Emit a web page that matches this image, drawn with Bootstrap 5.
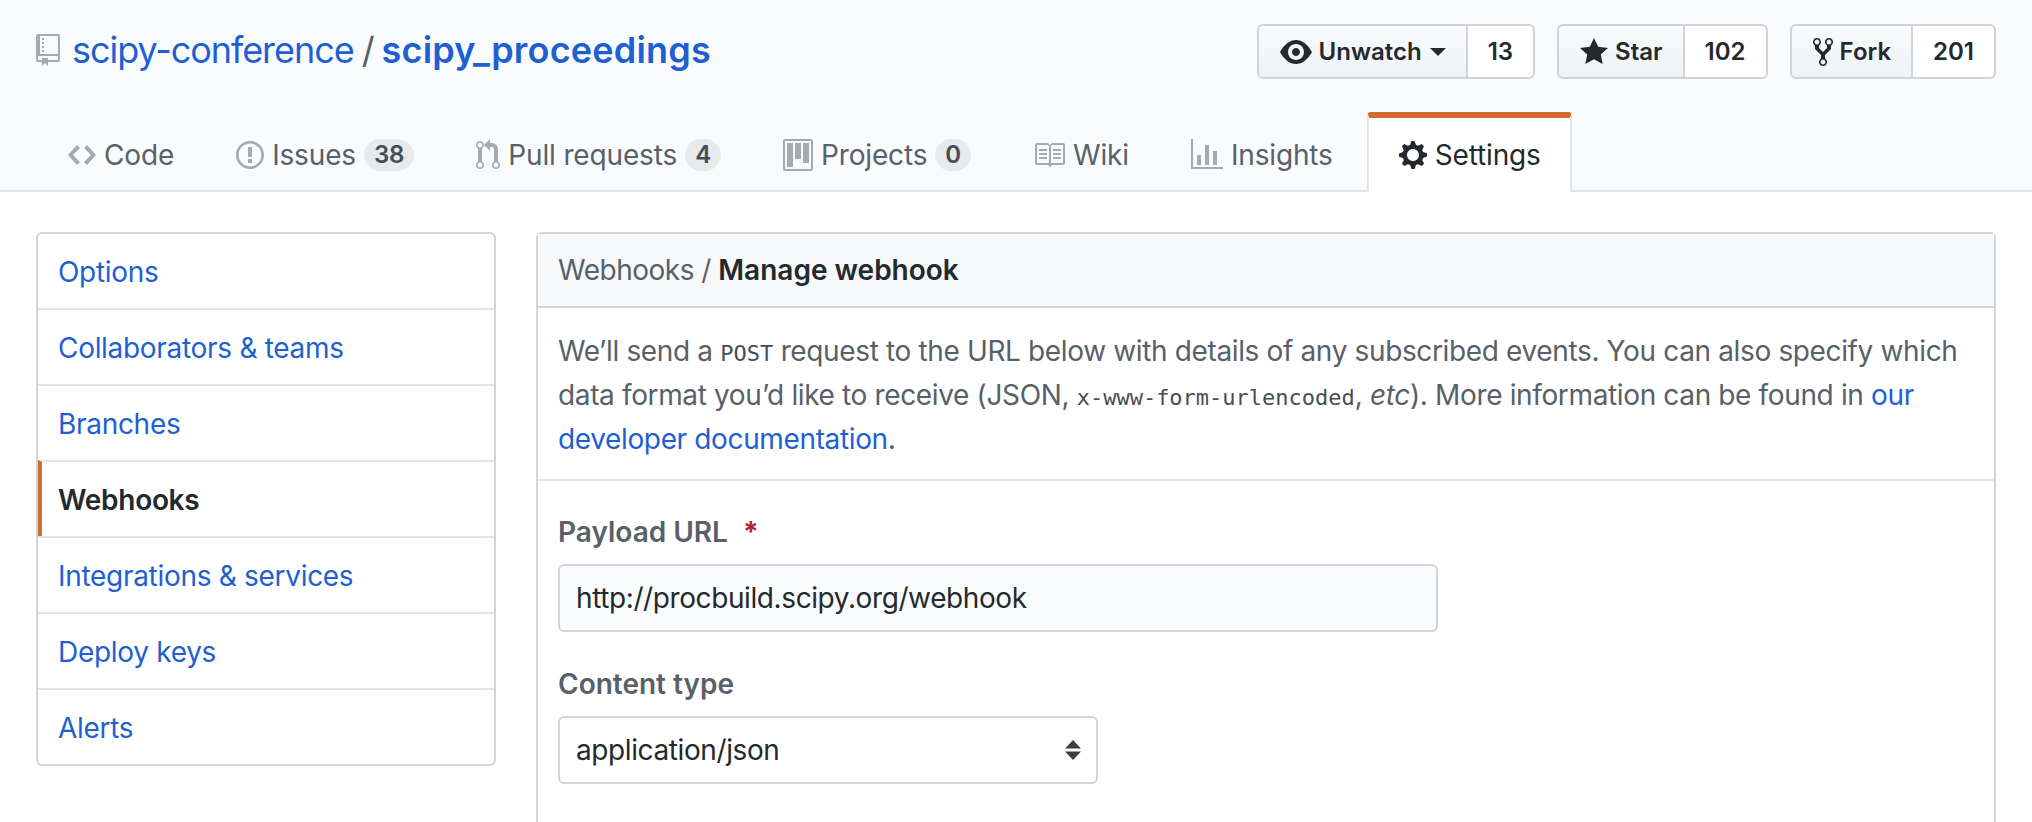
<!DOCTYPE html>
<html lang="en">
<head>
    <meta charset="UTF-8">
    <meta name="viewport" content="width=device-width, initial-scale=1.0">
    <title>Manage webhook</title>
    <link href="https://cdn.jsdelivr.net/npm/bootstrap@5.3.0/dist/css/bootstrap.min.css" rel="stylesheet">
    <style>
        body {
            font-family: Inter, Roboto, "Liberation Sans", sans-serif;
            font-size: 28px;
            color: #24292e;
            background-color: #fff;
            height: 100vh;
            overflow: hidden;
        }
        a { color: #1f5fd1; text-decoration: none; }
        .ic { fill: currentColor; flex: none; }

        .repo-head {
            height: 192px;
            background-color: #fafbfc;
            border-bottom: 2px solid #e1e4e8;
        }
        .repo-top {
            padding: 24px 36px 0 36px;
            height: 88px;
        }
        .repo-title { font-size: 36px; line-height: 54px; margin-top: -1px; letter-spacing: -1.05px; }
        .repo-title .ic { color: #a3aab1; margin-right: 12px; }
        .repo-title .sep { color: #586069; margin: 0 8px; }
        .repo-title .fw-semibold { letter-spacing: .2px; }

        .act-list { gap: 22px; }
        .act-btn {
            height: 55px;
            font-size: 24px;
            font-weight: 600;
            color: #24292e;
            border: 2px solid #d1d3d6;
            border-radius: 6px 0 0 6px;
            background-image: linear-gradient(-180deg, #fafbfc, #eff3f6 90%);
            padding: 0 20px 0 21px;
            gap: 7px;
        }
        .act-num {
            height: 55px;
            padding: 0 20px;
            font-size: 24px;
            font-weight: 600;
            border: 2px solid #d1d3d6;
            border-left: 0;
            border-radius: 0 6px 6px 0;
            background-color: #fff;
            color: #24292e;
        }
        .caret-dn {
            width: 0;
            height: 0;
            border-left: 8px solid transparent;
            border-right: 8px solid transparent;
            border-top: 8px solid #24292e;
            margin-left: 1px;
        }

        .repo-tabs {
            padding-left: 44px;
            margin-top: 24px;
            height: 80px;
            border-bottom: 0;
        }
        .tab-item {
            height: 80px;
            padding: 6px 24px 0 24px;
            color: #586069;
            gap: 8px;
            border: 0;
            letter-spacing: -.15px;
        }
        .tab-item + .tab-item { margin-left: 14px; }
        .tab-item .ic { color: #a3aab1; }
        .repo-tabs .tab-on {
            height: 80px;
            color: #24292e;
            background-color: #fff;
            border: 2px solid #e1e4e8;
            border-top: 6px solid #d26b2b;
            border-bottom: 0;
            border-radius: 4px 4px 0 0;
            padding: 0 29px 0 30px;
            margin-left: 10px;
        }
        .tab-on .ic { color: #24292e; }
        .tab-count {
            font-size: 24px;
            font-weight: 600;
            line-height: 1;
            color: #444d56;
            background-color: rgba(27, 31, 35, .08);
            border-radius: 40px;
            padding: 4px 10px;
        }

        .page-body { padding: 40px 36px 0 36px; gap: 40px; }
        .side-menu { width: 460px; flex: none; align-self: flex-start; border: 2px solid #d1d5da; border-radius: 6px; }
        .side-menu .side-link {
            height: 76px;
            padding: 2px 0 0 20px;
            display: flex;
            align-items: center;
            font-size: 28px;
            letter-spacing: -.3px;
            color: #1f5fd1;
            border: 0;
            border-top: 2px solid #e1e4e8;
        }
        .side-menu .side-link:first-child { border-top: 0; height: 74px; }
        .side-menu .side-on {
            font-weight: 600;
            color: #24292e;
            border-left: 4px solid #d26b2b;
            padding-left: 16px;
        }

        .hook-box { border: 2px solid #d1d5da; border-radius: 6px; min-height: 800px; }
        .hook-title {
            height: 74px;
            padding: 0 20px;
            background-color: #f6f8fa;
            border-bottom: 2px solid #d1d5da;
            color: #586069;
            letter-spacing: -.5px;
            display: flex;
            align-items: center;
        }
        .hook-title b { color: #24292e; font-weight: 600; letter-spacing: 0; }
        .hook-desc {
            padding: 21px 20px 18px 20px;
            line-height: 44px;
            letter-spacing: -.36px;
            color: #586069;
            border-bottom: 2px solid #e1e4e8;
        }
        .hook-desc code {
            font-family: "DejaVu Sans Mono", "Liberation Mono", monospace;
            font-size: 22px;
            line-height: 1;
            letter-spacing: 0;
            color: #444d56;
        }
        .hook-form { padding: 30px 20px; }
        .fld-label {
            display: block;
            font-weight: 600;
            color: #586069;
            line-height: 42px;
            margin-bottom: 11px;
        }
        .fld-req { color: #b3262f; margin-left: 8px; font-weight: 700; }
        .fld-input {
            width: 880px;
            height: 68px;
            font-size: 28px;
            letter-spacing: -.4px;
            padding: 0 20px 0 16px;
            color: #24292e;
            background-color: #fafbfc;
            border: 2px solid #d1d5da;
            border-radius: 6px;
            margin-bottom: 31px;
        }
        .fld-select {
            width: 540px;
            height: 68px;
            font-size: 28px;
            letter-spacing: -.4px;
            padding: 0 40px 0 16px;
            color: #24292e;
            border: 2px solid #d1d5da;
            border-radius: 6px;
            background-size: 16px 20px;
            background-position: right 15px center;
            background-image: url("data:image/svg+xml,%3Csvg xmlns='http://www.w3.org/2000/svg' viewBox='0 0 16 20'%3E%3Cpath fill='%233a3f44' d='M8 0l8 8.500H0zM8 20L0 11.500h16z'/%3E%3C/svg%3E");
        }
    </style>
</head>
<body>
    <svg width="0" height="0" class="position-absolute">
        <symbol id="i-repo" viewBox="0 0 12 16"><path d="M4 9H3V8h1v1zm0-3H3v1h1V6zm0-2H3v1h1V4zm0-2H3v1h1V2zm8-1v12c0 .55-.45 1-1 1H6v2l-1.500-1.500L3 16v-2H1c-.55 0-1-.45-1-1V1c0-.55.45-1 1-1h10c.55 0 1 .45 1 1zm-1 10H1v2h2v-1h3v1h5v-2zm0-10H2v9h9V1z"/></symbol>
        <symbol id="i-code" viewBox="0 0 14 16"><path d="M9.500 3L8 4.500 11.500 8 8 11.500 9.500 13 14 8 9.500 3zm-5 0L0 8l4.500 5L6 11.500 2.500 8 6 4.500 4.500 3z"/></symbol>
        <symbol id="i-issue" viewBox="0 0 14 16"><path d="M7 2.300c3.140 0 5.700 2.560 5.700 5.700s-2.560 5.700-5.700 5.700A5.710 5.710 0 0 1 1.300 8c0-3.140 2.560-5.700 5.700-5.700zM7 1C3.140 1 0 4.140 0 8s3.140 7 7 7 7-3.140 7-7-3.140-7-7-7zm1 3H6v5h2V4zm0 6H6v2h2v-2z"/></symbol>
        <symbol id="i-pull" viewBox="0 0 12 16"><path d="M11 11.280V5c-.03-.78-.34-1.470-.94-2.060C9.460 2.350 8.780 2.030 8 2H7V0L4 3l3 3V4h1c.27.02.48.11.69.31.21.2.3.42.31.69v6.280A1.993 1.993 0 0 0 10 15a1.993 1.993 0 0 0 1-3.720zm-1 2.920c-.66 0-1.200-.55-1.200-1.200 0-.65.55-1.200 1.200-1.200.65 0 1.200.55 1.200 1.200 0 .65-.55 1.200-1.200 1.200zM4 3c0-1.110-.89-2-2-2a1.993 1.993 0 0 0-1 3.720v6.560A1.993 1.993 0 0 0 2 15a1.993 1.993 0 0 0 1-3.720V4.720c.59-.34 1-.98 1-1.720zm-.8 10c0 .66-.55 1.200-1.200 1.200-.65 0-1.200-.55-1.200-1.200 0-.65.55-1.200 1.200-1.200.65 0 1.200.55 1.200 1.200zM2 4.200C1.340 4.200.8 3.650.8 3c0-.65.55-1.200 1.200-1.200.65 0 1.200.55 1.200 1.200 0 .65-.55 1.200-1.200 1.200z"/></symbol>
        <symbol id="i-project" viewBox="0 0 15 16"><path fill-rule="evenodd" d="M10 12h3V2h-3v10zm-4-2h3V2H6v8zm-4 4h3V2H2v12zm-1 1h13V1H1v14zM14 0H1a1 1 0 0 0-1 1v14a1 1 0 0 0 1 1h13a1 1 0 0 0 1-1V1a1 1 0 0 0-1-1z"/></symbol>
        <symbol id="i-book" viewBox="0 0 16 16"><path d="M3 5h4v1H3V5zm0 3h4V7H3v1zm0 2h4V9H3v1zm11-5h-4v1h4V5zm0 2h-4v1h4V7zm0 2h-4v1h4V9zm2-6v9c0 .55-.45 1-1 1H9.500l-1 1-1-1H2c-.55 0-1-.45-1-1V3c0-.55.45-1 1-1h5.500l1 1 1-1H15c.55 0 1 .45 1 1zm-8 .5L7.500 3H2v9h6V3.500zm7-.5H9.500l-.5.5V12h6V3z"/></symbol>
        <symbol id="i-graph" viewBox="0 0 16 16"><path d="M16 14v1H0V0h1v14h15zM5 13H3V8h2v5zm4 0H7V3h2v10zm4 0h-2V6h2v7z"/></symbol>
        <symbol id="i-gear" viewBox="0 0 14 16"><path d="M14 8.770v-1.600l-1.940-.64-.45-1.090.88-1.840-1.130-1.130-1.810.91-1.090-.45-.69-1.920h-1.600l-.63 1.940-1.110.45-1.840-.88-1.130 1.130.91 1.810-.45 1.090L0 7.230v1.590l1.940.64.45 1.090-.88 1.840 1.130 1.130 1.810-.91 1.090.45.69 1.920h1.590l.63-1.940 1.110-.45 1.840.88 1.130-1.130-.92-1.810.47-1.090L14 8.750v.02zM7 11c-1.660 0-3-1.340-3-3s1.340-3 3-3 3 1.340 3 3-1.340 3-3 3z"/></symbol>
        <symbol id="i-eye" viewBox="0 0 16 16"><path d="M8.060 2C3 2 0 8 0 8s3 6 8.060 6C13 14 16 8 16 8s-3-6-7.940-6zM8 12c-2.200 0-4-1.780-4-4 0-2.200 1.800-4 4-4 2.220 0 4 1.800 4 4 0 2.220-1.780 4-4 4zm2-4c0 1.110-.89 2-2 2-1.110 0-2-.89-2-2 0-1.110.89-2 2-2 1.110 0 2 .89 2 2z"/></symbol>
        <symbol id="i-star" viewBox="0 0 14 16"><path d="M14 6l-4.900-.64L7 1 4.900 5.360 0 6l3.600 3.260L2.670 14 7 11.670 11.330 14l-.93-4.740L14 6z"/></symbol>
        <symbol id="i-fork" viewBox="0 0 10 16"><path d="M8 1a1.993 1.993 0 0 0-1 3.720V6L5 8 3 6V4.720A1.993 1.993 0 0 0 2 1a1.993 1.993 0 0 0-1 3.720V6.500l3 3v1.780A1.993 1.993 0 0 0 5 15a1.993 1.993 0 0 0 1-3.720V9.500l3-3V4.720A1.993 1.993 0 0 0 8 1zM2 4.200C1.340 4.200.8 3.650.8 3c0-.65.55-1.200 1.200-1.200.65 0 1.200.55 1.200 1.200 0 .65-.55 1.200-1.200 1.200zm3 10c-.66 0-1.200-.55-1.200-1.200 0-.65.55-1.200 1.200-1.200.65 0 1.200.55 1.200 1.200 0 .65-.55 1.200-1.200 1.200zm3-10c-.66 0-1.200-.55-1.200-1.200 0-.65.55-1.200 1.200-1.200.65 0 1.200.55 1.200 1.200 0 .65-.55 1.200-1.200 1.200z"/></symbol>
    </svg>

    <header class="repo-head">
        <div class="repo-top d-flex justify-content-between align-items-start">
            <h1 class="repo-title d-flex align-items-center mb-0 fw-normal">
                <svg class="ic" width="24" height="32"><use href="#i-repo"/></svg>
                <a href="#">scipy-conference</a><span class="sep">/</span><a href="#" class="fw-semibold">scipy_proceedings</a>
            </h1>
            <div class="d-flex act-list">
                <div class="d-flex">
                    <a href="#" class="act-btn d-flex align-items-center">
                        <svg class="ic" width="32" height="32"><use href="#i-eye"/></svg>Unwatch<span class="caret-dn"></span>
                    </a>
                    <a href="#" class="act-num d-flex align-items-center justify-content-center">13</a>
                </div>
                <div class="d-flex">
                    <a href="#" class="act-btn d-flex align-items-center">
                        <svg class="ic" width="28" height="32"><use href="#i-star"/></svg>Star
                    </a>
                    <a href="#" class="act-num d-flex align-items-center justify-content-center">102</a>
                </div>
                <div class="d-flex">
                    <a href="#" class="act-btn d-flex align-items-center">
                        <svg class="ic" width="20" height="32"><use href="#i-fork"/></svg>Fork
                    </a>
                    <a href="#" class="act-num d-flex align-items-center justify-content-center">201</a>
                </div>
            </div>
        </div>
        <nav class="nav repo-tabs">
            <a class="nav-link tab-item d-flex align-items-center" href="#"><svg class="ic" width="28" height="32"><use href="#i-code"/></svg>Code</a>
            <a class="nav-link tab-item d-flex align-items-center" href="#"><svg class="ic" width="28" height="32"><use href="#i-issue"/></svg>Issues<span class="tab-count">38</span></a>
            <a class="nav-link tab-item d-flex align-items-center" href="#"><svg class="ic" width="24" height="32"><use href="#i-pull"/></svg>Pull requests<span class="tab-count">4</span></a>
            <a class="nav-link tab-item d-flex align-items-center" href="#"><svg class="ic" width="30" height="32"><use href="#i-project"/></svg>Projects<span class="tab-count">0</span></a>
            <a class="nav-link tab-item d-flex align-items-center" href="#"><svg class="ic" width="32" height="32"><use href="#i-book"/></svg>Wiki</a>
            <a class="nav-link tab-item d-flex align-items-center" href="#"><svg class="ic" width="32" height="32"><use href="#i-graph"/></svg>Insights</a>
            <a class="nav-link tab-item tab-on d-flex align-items-center" href="#"><svg class="ic" width="28" height="32"><use href="#i-gear"/></svg>Settings</a>
        </nav>
    </header>

    <main class="page-body d-flex">
        <nav class="side-menu list-group">
            <a class="side-link list-group-item" href="#">Options</a>
            <a class="side-link list-group-item" href="#">Collaborators &amp; teams</a>
            <a class="side-link list-group-item" href="#">Branches</a>
            <a class="side-link side-on list-group-item" href="#">Webhooks</a>
            <a class="side-link list-group-item" href="#">Integrations &amp; services</a>
            <a class="side-link list-group-item" href="#">Deploy keys</a>
            <a class="side-link list-group-item" href="#">Alerts</a>
        </nav>
        <section class="hook-box card flex-grow-1 rounded-2">
            <div class="hook-title"><span>Webhooks&nbsp;/&nbsp;<b>Manage webhook</b></span></div>
            <p class="hook-desc mb-0">We’ll send a <code>POST</code> request to the URL below with details of any subscribed events. You can also specify which data format you’d like to receive (JSON, <code>x-www-form-urlencoded</code>, <em>etc</em>). More information can be found in <a href="#">our developer documentation</a>.</p>
            <form class="hook-form">
                <label class="fld-label" for="payload">Payload URL <span class="fld-req">*</span></label>
                <input id="payload" type="text" class="form-control fld-input" value="http://procbuild.scipy.org/webhook">
                <label class="fld-label" for="ctype">Content type</label>
                <select id="ctype" class="form-select fld-select">
                    <option>application/json</option>
                </select>
            </form>
        </section>
    </main>

    <script src="https://cdn.jsdelivr.net/npm/bootstrap@5.3.0/dist/js/bootstrap.bundle.min.js"></script>
</body>
</html>
